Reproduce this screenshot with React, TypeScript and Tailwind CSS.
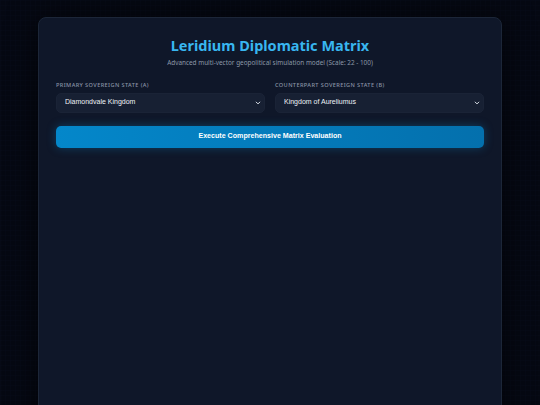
import React from "react";

function Chevron() {
  return (
    <svg className="pointer-events-none absolute right-[4px] top-1/2 -translate-y-1/2" width="6" height="6" viewBox="0 0 10 10" fill="none">
      <path d="M2 3.5 L5 6.5 L8 3.5" stroke="#e6ebf2" strokeWidth="1.6" strokeLinecap="round" strokeLinejoin="round" />
    </svg>
  );
}

function Field({ label, value }: { label: string; value: string }) {
  return (
    <div>
      <label className="block text-[5.6px] leading-[8px] font-medium tracking-[0.07em] uppercase text-[#8a94a6]">{label}</label>
      <div className="relative mt-[4px]">
        <select
          defaultValue={value}
          className="block h-[20px] w-full appearance-none rounded-[5px] border border-[#1a2336] bg-[#172033] pl-[8px] pr-[12px] text-[7px] text-[#eef2f7] outline-none"
          style={{ fontFamily: '"Liberation Sans", Arial, sans-serif' }}
        >
          <option>{value}</option>
        </select>
        <Chevron />
      </div>
    </div>
  );
}

export default function App() {
  return (
    <div
      className="h-[405px] overflow-hidden bg-[#050812] bg-[linear-gradient(rgba(56,100,180,0.02)_1px,transparent_1px),linear-gradient(90deg,rgba(56,100,180,0.02)_1px,transparent_1px)] bg-[size:5px_5px] px-[38px] pt-[17px]"
      style={{ fontFamily: '"Noto Sans", "Open Sans", sans-serif' }}
    >
      <div className="mx-auto h-[420px] w-[464px] rounded-[8px] border border-[#1c2638] bg-[#0f1729] px-[17px] pt-[17px] shadow-[0_0_30px_rgba(0,0,0,0.6)]">
        <h1 className="text-center text-[14.5px] leading-[20px] font-bold text-[#38b6f0]">Leridium Diplomatic Matrix</h1>
        <p className="mt-[2.5px] text-center text-[6.4px] leading-[9px] text-[#8c97a8]">
          Advanced multi-vector geopolitical simulation model (Scale: 22 - 100)
        </p>
        <div className="mt-[14px] grid grid-cols-2 gap-[10px]">
          <Field label="Primary Sovereign State (A)" value="Diamondvale Kingdom" />
          <Field label="Counterpart Sovereign State (B)" value="Kingdom of Aureliumus" />
        </div>
        <button
          className="mt-[13px] flex h-[22px] w-full items-center justify-center rounded-[5px] bg-[linear-gradient(90deg,#0487ca,#0470ad)] text-[7.1px] font-bold text-white shadow-[0_0_10px_rgba(14,140,210,0.35)]"
          style={{ fontFamily: '"Liberation Sans", Arial, sans-serif' }}
        >
          Execute Comprehensive Matrix Evaluation
        </button>
      </div>
    </div>
  );
}
